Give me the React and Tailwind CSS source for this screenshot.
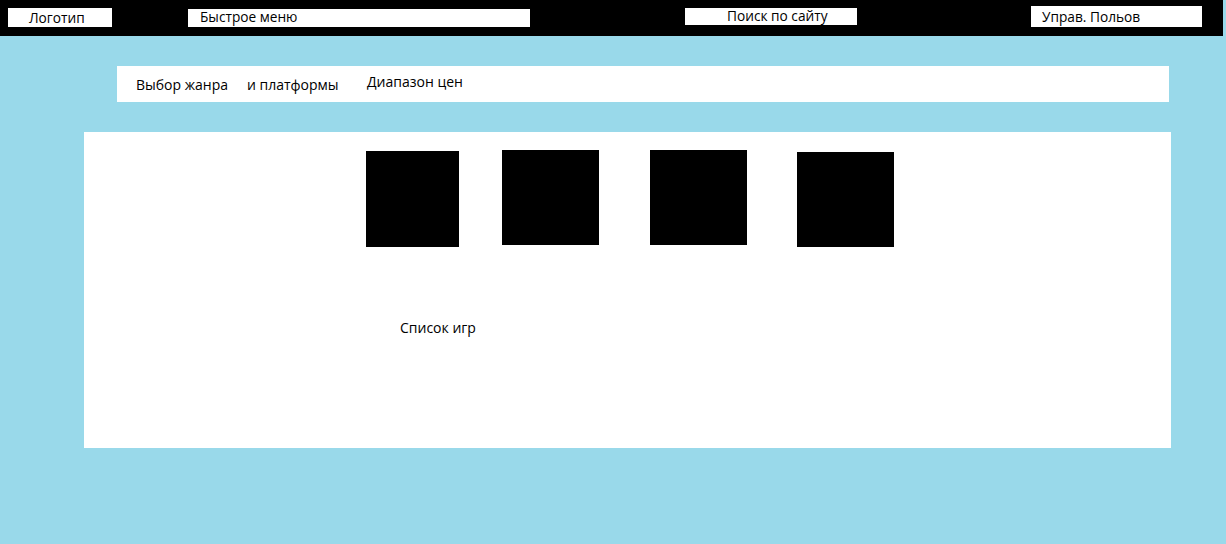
const font = { fontFamily: '"Open Sans", "Noto Sans", sans-serif' }

const covers = [
  ['ml-0 mt-[19px] w-[93px] h-[96px]'],
  ['ml-[43px] mt-[18px] w-[97px] h-[95px]'],
  ['ml-[51px] mt-[18px] w-[97px] h-[95px]'],
  ['ml-[50px] mt-[20px] w-[97px] h-[95px]'],
]

export default function App() {
  return (
    <div className="min-h-[544px] bg-[#99d9ea] text-[14px] leading-[18px] text-black" style={font}>
      <header className="flex h-[36px] w-[1223px] items-start bg-black text-[13.7px]">
        <div className="ml-[8px] mt-[8px] h-[19px] w-[104px] bg-white pl-[21px] leading-[19px]">Логотип</div>
        <div className="ml-[76px] mt-[9px] h-[18px] w-[342px] bg-white pl-[12px] leading-[15px]">Быстрое меню</div>
        <div className="ml-[155px] mt-[8px] h-[17px] w-[172px] bg-white pl-[42px] leading-[15px]">Поиск по сайту</div>
        <div className="ml-[174px] mt-[6px] h-[21px] w-[171px] bg-white pl-[11px] leading-[22px]">Управ. Польов</div>
      </header>

      <nav className="ml-[117px] mt-[30px] flex h-[36px] w-[1052px] items-start bg-white pl-[19px]">
        <span className="mt-[10px] w-[111px]">Выбор жанра</span>
        <span className="mt-[10px] w-[120px]">и платформы</span>
        <span className="mt-[7px]">Диапазон цен</span>
      </nav>

      <main className="ml-[84px] mt-[30px] flex h-[316px] w-[1087px] flex-col bg-white pl-[282px]">
        <div className="flex items-start">
          {covers.map(([cls], i) => <div key={i} className={`bg-black ${cls}`} />)}
        </div>
        <p className="ml-[34px] mt-[72px]">Список игр</p>
      </main>
    </div>
  )
}
